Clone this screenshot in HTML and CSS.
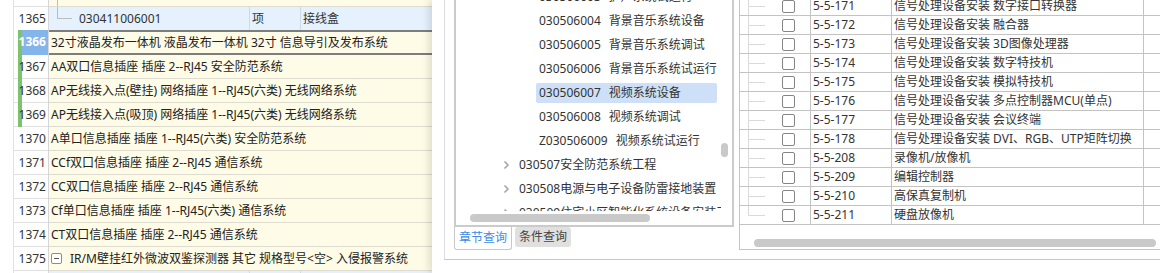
FILE: index.html
```html
<!DOCTYPE html>
<html lang="zh-CN">
<head>
    <meta charset="UTF-8">
    <title>清单定额</title>
    <link rel="stylesheet" href="styles.css">
</head>
<body>
    <div class="page">
        <!-- 清单表格 -->
        <div class="grid">
            <div class="grid-rows">
                <div class="row group top">
                    <div class="gutter"></div>
                    <div class="num"></div>
                    <div class="cell"><span class="toggle"></span></div>
                </div>
                <div class="row detail">
                    <div class="gutter"></div>
                    <div class="num">1365</div>
                    <div class="cell code">030411006001</div>
                    <div class="cell unit">项</div>
                    <div class="cell name">接线盒</div>
                </div>
                <div class="row current mark">
                    <div class="gutter"></div>
                    <div class="num">1366</div>
                    <div class="cell">32寸液晶发布一体机 液晶发布一体机 32寸 信息导引及发布系统</div>
                </div>
                <div class="row mark">
                    <div class="gutter"></div>
                    <div class="num">1367</div>
                    <div class="cell">AA双口信息插座 插座 2--RJ45 安全防范系统</div>
                </div>
                <div class="row mark">
                    <div class="gutter"></div>
                    <div class="num">1368</div>
                    <div class="cell">AP无线接入点(壁挂) 网络插座 1--RJ45(六类) 无线网络系统</div>
                </div>
                <div class="row mark">
                    <div class="gutter"></div>
                    <div class="num">1369</div>
                    <div class="cell">AP无线接入点(吸顶) 网络插座 1--RJ45(六类) 无线网络系统</div>
                </div>
                <div class="row">
                    <div class="gutter"></div>
                    <div class="num">1370</div>
                    <div class="cell">A单口信息插座 插座 1--RJ45(六类) 安全防范系统</div>
                </div>
                <div class="row">
                    <div class="gutter"></div>
                    <div class="num">1371</div>
                    <div class="cell">CCf双口信息插座 插座 2--RJ45 通信系统</div>
                </div>
                <div class="row">
                    <div class="gutter"></div>
                    <div class="num">1372</div>
                    <div class="cell">CC双口信息插座 插座 2--RJ45 通信系统</div>
                </div>
                <div class="row">
                    <div class="gutter"></div>
                    <div class="num">1373</div>
                    <div class="cell">Cf单口信息插座 插座 1--RJ45(六类) 通信系统</div>
                </div>
                <div class="row">
                    <div class="gutter"></div>
                    <div class="num">1374</div>
                    <div class="cell">CT双口信息插座 插座 2--RJ45 通信系统</div>
                </div>
                <div class="row group">
                    <div class="gutter"></div>
                    <div class="num">1375</div>
                    <div class="cell"><span class="toggle"></span>IR/M壁挂红外微波双鉴探测器 其它 规格型号&lt;空&gt; 入侵报警系统</div>
                </div>
                <div class="row detail">
                    <div class="gutter"></div>
                    <div class="num"></div>
                    <div class="cell code plain"></div>
                    <div class="cell unit"></div>
                    <div class="cell name"></div>
                </div>
            </div>
        </div>

        <!-- 定额选择窗口 -->
        <div class="dialog">
            <div class="frame">
                <div class="left-pane">
                    <div class="tree-box">
                        <div class="tree-view">
                            <ul class="tree">
                                <li class="leaf"><span class="label"><span class="tcode">030506003</span>扩声系统试运行</span></li>
                                <li class="leaf"><span class="label"><span class="tcode">030506004</span>背景音乐系统设备</span></li>
                                <li class="leaf"><span class="label"><span class="tcode">030506005</span>背景音乐系统调试</span></li>
                                <li class="leaf"><span class="label"><span class="tcode">030506006</span>背景音乐系统试运行</span></li>
                                <li class="leaf selected"><span class="label"><span class="tcode">030506007</span>视频系统设备</span></li>
                                <li class="leaf"><span class="label"><span class="tcode">030506008</span>视频系统调试</span></li>
                                <li class="leaf"><span class="label"><span class="tcode">Z030506009</span>视频系统试运行</span></li>
                                <li class="branch"><svg class="chevron" width="16" height="20" viewBox="0 0 16 20"><path d="M5.5 6.5 L9 10 L5.5 13.5" fill="none" stroke="#a3a3a3" stroke-width="1.5"/></svg>030507安全防范系统工程</li>
                                <li class="branch"><svg class="chevron" width="16" height="20" viewBox="0 0 16 20"><path d="M5.5 6.5 L9 10 L5.5 13.5" fill="none" stroke="#a3a3a3" stroke-width="1.5"/></svg>030508电源与电子设备防雷接地装置</li>
                                <li class="branch"><svg class="chevron" width="16" height="20" viewBox="0 0 16 20"><path d="M5.5 6.5 L9 10 L5.5 13.5" fill="none" stroke="#a3a3a3" stroke-width="1.5"/></svg>030509住宅小区智能化系统设备安装工程</li>
                            </ul>
                        </div>
                        <div class="vbar"><div class="thumb"></div></div>
                        <div class="hbar"><div class="thumb"></div></div>
                    </div>
                    <div class="tabs">
                        <span class="tab active">章节查询</span>
                        <span class="tab">条件查询</span>
                    </div>
                </div>

                <div class="right-pane">
                    <div class="quota-view">
                        <div class="quota-rows">
                            <div class="q-row"><div class="q-tree"><span class="check"></span></div><div class="q-code">5-5-171</div><div class="q-name">信号处理设备安装 数字接口转换器</div><div class="q-rest"></div></div>
                            <div class="q-row"><div class="q-tree"><span class="check"></span></div><div class="q-code">5-5-172</div><div class="q-name">信号处理设备安装 融合器</div><div class="q-rest"></div></div>
                            <div class="q-row"><div class="q-tree"><span class="check"></span></div><div class="q-code">5-5-173</div><div class="q-name">信号处理设备安装 3D图像处理器</div><div class="q-rest"></div></div>
                            <div class="q-row"><div class="q-tree"><span class="check"></span></div><div class="q-code">5-5-174</div><div class="q-name">信号处理设备安装 数字特技机</div><div class="q-rest"></div></div>
                            <div class="q-row"><div class="q-tree"><span class="check"></span></div><div class="q-code">5-5-175</div><div class="q-name">信号处理设备安装 模拟特技机</div><div class="q-rest"></div></div>
                            <div class="q-row"><div class="q-tree"><span class="check"></span></div><div class="q-code">5-5-176</div><div class="q-name">信号处理设备安装 多点控制器MCU(单点)</div><div class="q-rest"></div></div>
                            <div class="q-row"><div class="q-tree"><span class="check"></span></div><div class="q-code">5-5-177</div><div class="q-name">信号处理设备安装 会议终端</div><div class="q-rest"></div></div>
                            <div class="q-row"><div class="q-tree"><span class="check"></span></div><div class="q-code">5-5-178</div><div class="q-name">信号处理设备安装 DVI、RGB、UTP矩阵切换</div><div class="q-rest"></div></div>
                            <div class="q-row"><div class="q-tree"><span class="check"></span></div><div class="q-code">5-5-208</div><div class="q-name">录像机/放像机</div><div class="q-rest"></div></div>
                            <div class="q-row"><div class="q-tree"><span class="check"></span></div><div class="q-code">5-5-209</div><div class="q-name">编辑控制器</div><div class="q-rest"></div></div>
                            <div class="q-row"><div class="q-tree"><span class="check"></span></div><div class="q-code">5-5-210</div><div class="q-name">高保真复制机</div><div class="q-rest"></div></div>
                            <div class="q-row last"><div class="q-tree"><span class="check"></span></div><div class="q-code">5-5-211</div><div class="q-name">硬盘放像机</div><div class="q-rest"></div></div>
                        </div>
                    </div>
                    <div class="hbar wide"><div class="thumb"></div></div>
                </div>
            </div>
        </div>
    </div>
</body>
</html>
```

FILE: styles.css
```css
* {
    box-sizing: border-box;
}
body {
    margin: 0;
    font-family: "Noto Sans", "Noto Sans CJK SC", sans-serif;
    font-size: 12px;
    color: #222;
    background: #fff;
}
.page {
    display: flex;
    width: 1160px;
    height: 273px;
    overflow: hidden;
}

/* 清单表格 */
.grid {
    width: 432px;
    flex: none;
    overflow: hidden;
}
.grid-rows {
    margin-top: -17px;
}
.row {
    display: flex;
    height: 24px;
    line-height: 23px;
    white-space: nowrap;
}
.gutter {
    width: 14px;
    flex: none;
    border-right: 1px solid #e2e2e2;
}
.num {
    width: 35px;
    flex: none;
    text-align: right;
    padding-right: 2px;
    color: #333;
    border-right: 1px solid #d6d6d6;
    background: linear-gradient(#e0e0e0, #e0e0e0) 0 100% / 100% 1px no-repeat, #fff;
}
.cell {
    flex: 1;
    overflow: hidden;
    padding-left: 2px;
    background: #fefbe6;
    border-bottom: 1px solid #dedbd0;
}
.toggle {
    display: inline-block;
    width: 11px;
    height: 11px;
    margin-right: 8px;
    vertical-align: -1px;
    border: 1px solid #8c8c8c;
    border-radius: 2px;
    background: linear-gradient(#555, #555) center / 5px 1px no-repeat, #fff;
}
.row.top .cell {
    background: linear-gradient(#bcbcbc, #bcbcbc) 8px 100% / 1px 6px no-repeat, #fefbe6;
}
.row.detail .cell {
    flex: none;
    color: #333;
    background: #e5f1fd;
    border-bottom: 1px solid #d4dde6;
}
.row.detail .code {
    width: 201px;
    padding-left: 30px;
    border-right: 1px solid #cfd9e3;
    background: linear-gradient(#bcbcbc, #bcbcbc) 8px 0 / 1px 12px no-repeat,
                linear-gradient(#bcbcbc, #bcbcbc) 8px 11px / 15px 1px no-repeat,
                #e5f1fd;
}
.row.detail .code.plain {
    background: #e5f1fd;
}
.row.detail .unit {
    width: 51px;
    border-right: 1px solid #cfd9e3;
}
.row.detail .name {
    flex: 1;
}
.row.mark .num {
    background: linear-gradient(#7dc36b, #7dc36b) 4px 0 / 4px 100% no-repeat,
                linear-gradient(#e0e0e0, #e0e0e0) 0 100% / 100% 1px no-repeat,
                #fff;
}
.row.current {
    height: 25px;
    margin-top: -1px;
    line-height: 21px;
}
.row.current .num {
    color: #fff;
    font-weight: bold;
    line-height: 24px;
    background: linear-gradient(#7dc36b, #7dc36b) 4px 0 / 4px 100% no-repeat,
                linear-gradient(#84b5ea, #84b5ea) 8px 0 / 100% 100% no-repeat,
                #fff;
}
.row.current .cell {
    border-top: 2px solid #7d7d7d;
    border-bottom: 2px solid #7d7d7d;
}

/* 定额窗口 */
.dialog {
    flex: 1;
    background: #fff;
    box-shadow: -3px 0 8px rgba(0, 0, 0, 0.13);
}
.frame {
    display: flex;
    height: 260px;
    margin-left: 12px;
    border-left: 1px solid #dcdcdc;
    border-bottom: 1px solid #c8c8c8;
}
.left-pane {
    width: 289px;
    flex: none;
    padding-left: 9px;
}
.tree-box {
    display: grid;
    grid-template-columns: 1fr 11px;
    grid-template-rows: 1fr 14px;
    height: 227px;
    border: 2px solid #cbcbcb;
    border-top: 0;
    color: #333;
}
.tree-view {
    overflow: hidden;
}
.tree {
    list-style: none;
    margin: -13px 0 0;
    padding: 0;
}
.tree li {
    height: 20px;
    line-height: 20px;
    margin-bottom: 4px;
    white-space: nowrap;
}
.tree .leaf {
    padding-left: 80px;
}
.tree .label {
    display: block;
    margin-right: 4px;
    padding-left: 3px;
    border-radius: 2px;
}
.tree .selected .label {
    background: #cde0f7;
}
.tcode {
    margin-right: 8px;
}
.tree .branch {
    padding-left: 43px;
    display: flex;
    align-items: center;
}
.chevron {
    flex: none;
    margin-right: 4px;
}
.vbar .thumb {
    width: 7px;
    height: 14px;
    margin-top: 143px;
    border-radius: 4px;
    background: #c9c9c9;
}
.hbar {
    grid-column: 1 / -1;
}
.hbar .thumb {
    width: 180px;
    height: 8px;
    margin: 3px 0 0 14px;
    border-radius: 4px;
    background: #c9c9c9;
}
.tabs {
    display: flex;
    gap: 3px;
}
.tab {
    height: 20px;
    line-height: 20px;
    padding: 0 4px;
    border-radius: 3px;
    background: #e0e0e0;
    color: #444;
}
.tab.active {
    height: 23px;
    line-height: 22px;
    color: #3a8ce4;
    background: #fff;
    border: 1px solid #c8c8c8;
    border-top: 0;
    border-radius: 0 0 3px 3px;
}

.right-pane {
    width: 421px;
    flex: none;
    height: 250px;
    margin-left: 5px;
    border-left: 1px solid #c4c4c4;
    border-bottom: 1px solid #c4c4c4;
    color: #333;
}
.quota-view {
    height: 225px;
    overflow: hidden;
}
.quota-rows {
    margin-top: -3px;
}
.q-row {
    display: flex;
    height: 19px;
    line-height: 18px;
    white-space: nowrap;
    border-bottom: 1px solid #c3c3c3;
}
.q-tree {
    width: 71px;
    flex: none;
    display: flex;
    align-items: center;
    padding-left: 42px;
    border-right: 1px solid #c3c3c3;
    background: linear-gradient(#dadada, #dadada) 8px 0 / 1px 100% no-repeat,
                linear-gradient(#dadada, #dadada) 8px 9px / 17px 1px no-repeat;
}
.q-row.last .q-tree {
    background: linear-gradient(#dadada, #dadada) 8px 0 / 1px 10px no-repeat,
                linear-gradient(#dadada, #dadada) 8px 9px / 17px 1px no-repeat;
}
.check {
    width: 13px;
    height: 13px;
    border: 1px solid #858585;
    border-radius: 2px;
    background: #fff;
}
.q-code {
    width: 81px;
    flex: none;
    padding-left: 2px;
    border-right: 1px solid #c3c3c3;
}
.q-name {
    width: 252px;
    flex: none;
    padding-left: 2px;
    overflow: hidden;
    border-right: 1px solid #c3c3c3;
}
.q-rest {
    flex: 1;
}
.hbar.wide .thumb {
    width: auto;
    margin: 14px 4px 0 14px;
}
```
